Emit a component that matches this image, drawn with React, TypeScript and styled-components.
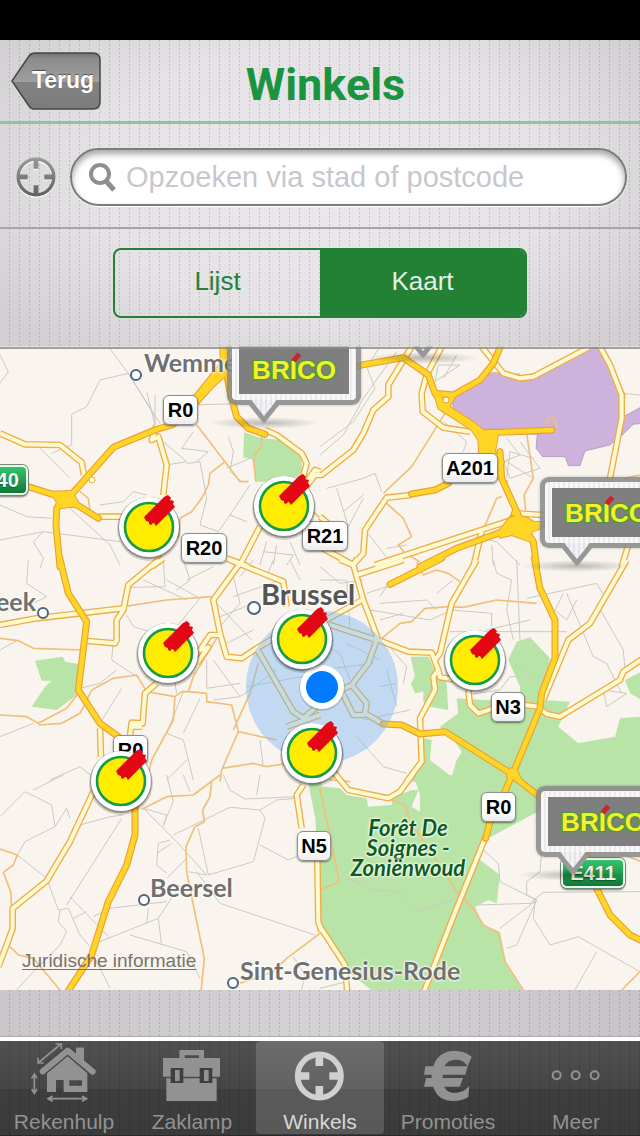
import React from "react";
import styled, { createGlobalStyle, css } from "styled-components";

const GREEN = "#238135";
const MAP_TOP = 346;
const MAP_WIDTH = 640;
const MAP_HEIGHT = 644;

const GlobalStyle = createGlobalStyle`
  *, *::before, *::after { box-sizing: border-box; }
  body { margin: 0; background: #000; font-family: "Liberation Sans", Arial, sans-serif; }
  button { font: inherit; color: inherit; border: 0; padding: 0; background: none; cursor: pointer; }
`;

const paper = css`
  background:
    conic-gradient(from 270deg at 1px 2px, rgba(120, 112, 118, 0.3) 90deg, transparent 0) 9px 0 / 10px 4px,
    radial-gradient(ellipse 60% 75% at 50% 45%, #ebe9ec 0%, #e4e2e5 60%, #d3d0d4 100%);
`;

const Screen = styled.div`
  min-height: 100vh;
  display: flex;
  flex-direction: column;
`;

const StatusBar = styled.div`
  height: 40px;
  background: #000;
`;

const Page = styled.div`
  flex: 1;
  display: flex;
  flex-direction: column;
  position: relative;
  background: #cfccd0;
`;

const Top = styled.div`
  ${paper}
`;

const Header = styled.header`
  display: grid;
  grid-template-columns: 104px 1fr 104px;
  align-items: center;
  height: 84px;
  padding: 0 0 0 11px;
  border-bottom: 3px solid #8cc79b;
`;

const BackButton = styled.button`
  position: relative;
  width: 90px;
  height: 58px;
  padding-left: 14px;
  color: #fff;
  font-size: 23px;
  font-weight: 700;
  text-shadow: 0 -1px 1px rgba(0, 0, 0, 0.5);

  svg { position: absolute; inset: 0; }
  span { position: relative; }
`;

const Title = styled.h1`
  margin: 8px 0 0;
  color: #1a9440;
  font-family: Roboto, "Liberation Sans", sans-serif;
  font-size: 45px;
  line-height: 60px;
  font-weight: 700;
  text-align: center;
`;

const SearchRow = styled.form`
  display: flex;
  align-items: center;
  gap: 12px;
  height: 105px;
  padding: 2px 13px 0 14px;
  border-bottom: 2px solid #a6a4a7;
`;

const LocateButton = styled.button`
  width: 44px;
  height: 44px;
  svg { display: block; }
`;

const SearchField = styled.label`
  flex: 1;
  display: flex;
  align-items: center;
  gap: 10px;
  height: 58px;
  padding: 0 24px 0 16px;
  border: 2px solid #7b7b7b;
  border-radius: 29px;
  background: #fff;
  box-shadow: inset 0 4px 6px rgba(0, 0, 0, 0.35), 0 1px 1px #fff;
`;

const SearchInput = styled.input`
  flex: 1;
  min-width: 0;
  height: 44px;
  padding: 2px 0 0;
  border: 0;
  outline: 0;
  background: transparent;
  color: #333;
  font-family: inherit;
  font-size: 29px;
  &::placeholder { color: #c7c7cd; opacity: 1; }
`;

const SegmentRow = styled.div`
  display: flex;
  justify-content: center;
  height: 117px;
  padding-top: 19px;
`;

const Segments = styled.div`
  display: flex;
  width: 414px;
  max-width: 90%;
  height: 70px;
  border: 2px solid ${GREEN};
  border-radius: 8px;
  overflow: hidden;
`;

const Segment = styled.button<{ $active?: boolean }>`
  flex: 1;
  padding-bottom: 4px;
  font-size: 26px;
  background: ${(p) => (p.$active ? GREEN : "transparent")};
  color: ${(p) => (p.$active ? "#e4efe6" : GREEN)};
`;

const MapView = styled.main`
  flex: 1;
  min-height: 500px;
  position: relative;
  overflow: hidden;
  background: #f9f5ee;

  &::after {
    content: "";
    position: absolute;
    inset: 0 0 auto;
    height: 3px;
    background: linear-gradient(rgba(220, 218, 220, 0.7) 0 1px, rgba(140, 138, 140, 0.8) 1px);
  }
`;

const MapPlane = styled.div`
  position: absolute;
  top: 0;
  left: 50%;
  width: ${MAP_WIDTH}px;
  height: ${MAP_HEIGHT}px;
  margin-left: -${MAP_WIDTH / 2}px;
  > svg { position: absolute; left: 0; top: 0; }
`;

type Spot = { $x: number; $y: number };

const at = css<Spot>`
  position: absolute;
  left: ${(p) => p.$x}px;
  top: ${(p) => p.$y - MAP_TOP}px;
`;

const Place = styled.span<Spot & { $city?: boolean; $end?: boolean }>`
  ${at}
  ${(p) => p.$end && "transform: translateX(-100%);"}
  color: ${(p) => (p.$city ? "#555" : "#707070")};
  font-family: Lato, sans-serif;
  font-size: ${(p) => (p.$city ? 29 : 25)}px;
  line-height: 24px;
  font-weight: 700;
  white-space: nowrap;
  text-shadow: 0 0 2px #fff, 0 0 3px #fff, 0 0 3px #fff;
`;

const ForestName = styled.span<Spot>`
  ${at}
  width: 140px;
  color: #0e5c1c;
  font-family: Lato, sans-serif;
  font-size: 22px;
  line-height: 20px;
  font-style: italic;
  font-weight: 700;
  text-align: center;
  text-shadow: 0 0 2px #fff, 0 0 3px #fff, 0 0 3px #fff;
`;

const Shield = styled.span<Spot & { $w: number; $green?: boolean }>`
  ${at}
  width: ${(p) => p.$w}px;
  height: 30px;
  border: 1px solid #8d8d8d;
  border-radius: 6px;
  background: linear-gradient(#fff 60%, #ececec);
  box-shadow: 0 1px 2px rgba(0, 0, 0, 0.5);
  color: #000;
  font-size: 20px;
  line-height: 29px;
  font-weight: 700;
  text-align: center;
  ${(p) =>
    p.$green &&
    css`
      border: 2px solid #eef5ee;
      background: linear-gradient(#35c46c, #0e7a36);
      box-shadow: 0 0 0 1px #6d8a74, 0 2px 2px rgba(0, 0, 0, 0.5);
      color: #f2faf3;
      line-height: 27px;
      text-shadow: 0 1px 1px rgba(0, 60, 20, 0.6);
    `}
`;

const PinButton = styled.button<Spot>`
  ${at}
  width: 76px;
  height: 80px;
  margin: -40px 0 0 -38px;
  svg { display: block; }
`;

const CalloutButton = styled.button<Spot>`
  ${at}
  width: 134px;
  height: 71px;
  padding: 6px 7px;
  border: 5px solid rgba(135, 135, 135, 0.85);
  border-radius: 9px;
  background: repeating-linear-gradient(to right, #f8f8f9 0 3px, #ebebed 3px 5px) padding-box;
  box-shadow: 0 0 3px rgba(0, 0, 0, 0.25);

  svg { position: absolute; left: -24px; top: 61px; }
`;

const BrandPlate = styled.span`
  display: flex;
  align-items: center;
  justify-content: center;
  height: 49px;
  background: #7f7f7f;
`;

const Brand = styled.span`
  position: relative;
  color: #f7ee2c;
  font-size: 26px;
  line-height: 28px;
  font-weight: 700;
  -webkit-text-stroke: 3px #4d9a3c;
  paint-order: stroke fill;

  &::after {
    content: "";
    position: absolute;
    left: 40px;
    top: -1px;
    width: 9px;
    height: 5px;
    background: #c9252c;
    transform: rotate(-48deg);
  }
`;

const LegalLink = styled.a<Spot>`
  ${at}
  color: #77736e;
  font-size: 19px;
  line-height: 22px;
  text-decoration: underline;
  text-underline-offset: 2px;
  text-decoration-thickness: 1px;
`;

const BottomStrip = styled.div`
  height: 47px;
  background:
    conic-gradient(from 270deg at 1px 2px, rgba(110, 102, 108, 0.3) 90deg, transparent 0) 9px 0 / 10px 4px,
    linear-gradient(to right, #cac6ca, #d4d2d5 50%, #c8c3c9);
`;

const TabBar = styled.nav`
  display: flex;
  height: 99px;
  border-top: 4px solid #fff;
  box-shadow: 0 -1px 0 #aaa8ab;
  background:
    repeating-linear-gradient(to right, transparent 0 9px, rgba(0, 0, 0, 0.1) 9px 10px),
    linear-gradient(#505050 0, #464646 48px, #3e3e3e 48px, #3b3b3b 94px, #2a2a2a 94px);
`;

const Tab = styled.button<{ $active?: boolean }>`
  flex: 1;
  height: 93px;
  display: flex;
  flex-direction: column;
  align-items: center;
  gap: 4px;
  border-radius: 4px;
  font-size: 21px;
  line-height: 26px;
  color: ${(p) => (p.$active ? "#d8d8d8" : "#929292")};
  background: ${(p) => (p.$active ? "linear-gradient(#6c6c6c, #626262 48px, #5a5a5a 48px, #585858)" : "none")};
  svg { flex: none; }
`;

/* Map geometry: six survey sheets, three drawing units to the pixel. */
type Sheet = {
  x: number;
  y: number;
  parks: string;
  airport?: string;
  lanes: string;
  minor: string;
  roads: string;
  motorways: string;
  hubs?: string;
};

const sheets: Sheet[] = [
  {
    x: 0,
    y: 345,
    parks: "M732,262 L785,280 L850,285 L905,330 L905,380 L880,410 L765,410 L758,340 L730,338Z",
    lanes:
      "M325,5 L385,85 L480,235 M385,85 L300,105 L260,185 L215,208 L215,300 L155,325 M120,310 L210,400 M0,30 L25,80 L0,115 M385,85 L465,215 M440,140 L465,240 M590,180 L730,175 M490,290 L560,350 L510,358 M580,260 L545,310 L625,320 L590,350 M560,355 L600,350 L620,460 L600,540 L655,560 L690,510 M680,370 L750,340 L770,345 M0,480 L80,515 L155,520 M0,585 L130,560 L100,590 L130,640 L120,670 M210,490 L330,600 L360,660 M300,480 L370,470 L400,440 L440,450 M750,420 L690,510 L740,530 M790,620 L880,630 L860,660 M685,275 L700,320 L690,380 L725,410 M130,560 L360,590 M465,150 L465,240 M870,590 L900,660 M800,590 L780,660 M830,600 L820,660",
    minor:
      "M590,240 L675,350 L720,410 L745,410 M675,350 L630,385 L625,420 L605,460 L575,500 L540,520 L535,580 M785,275 L785,300 L760,340 L768,410 M240,440 L265,460 L270,500 L300,525 M940,500 L960,520",
    roads:
      "M0,265 L75,298 L180,300 L245,352 L252,390 M470,240 L455,285 L475,275 L500,360 L490,450 M295,515 L370,515 M795,255 L830,270 L905,325 L920,355 L908,400 M920,410 L945,375 L960,380 M720,660 L780,545 M455,665 L490,640 M680,640 L720,655 L745,665",
    motorways:
      "M670,-5 L672,60 L660,92 L590,170 L545,220 L515,240 L470,253 L340,307 L215,448 M675,60 L690,140 L710,215 L745,250 L795,268 M85,425 L195,460 M200,460 L295,520 M200,455 L170,490 L168,540 L180,665",
    hubs: "M580,155 L665,50 L680,90 L600,160Z M150,440 L215,438 L245,490 L215,485 L180,490 L165,500 L170,470Z M660,-5 L688,-5 L684,80 L664,80Z",
  },
  {
    x: 320,
    y: 345,
    parks: "",
    airport:
      "M397,155 L515,83 L600,100 L640,95 L800,8 L835,5 L870,50 L915,150 L905,270 L870,300 L795,318 L780,362 L745,362 L735,335 L668,335 L648,310 L652,268 L535,265 L500,262 L400,195Z M910,215 L965,185 L965,235 L940,238 L905,272Z",
    lanes:
      "M180,5 L140,65 L165,130 L100,230 L0,305 M230,20 L130,160 L70,270 L0,330 M355,60 L420,60 L345,110 L355,60 M410,30 L370,100 M370,230 L440,290 L430,320 M560,280 L600,330 L550,350 L570,400 L660,370 L600,290 M20,430 L130,400 L165,385 L185,440 M50,430 L85,545 L130,460 M70,500 L130,450 M480,580 L530,590 L600,660 M140,560 L210,650 M560,350 L640,400 M560,400 L570,320 L640,340 M910,145 L960,150 M515,600 L520,660 M200,610 L260,600",
    minor:
      "M375,205 L275,365 L190,445 M200,475 L250,520 L275,575 L235,600 L255,625 L300,650 M620,265 L640,400 L612,450 L617,495 M545,455 L530,460 L470,600 M675,240 L688,218 L704,222 L710,250 M515,83 L600,88 M545,408 L565,408 M915,400 L960,390",
    roads:
      "M275,5 L205,120 L205,155 L160,195 L130,265 L100,315 L5,390 L-15,390 L-60,450 L-80,465 M365,5 L320,90 L305,145 L308,200 L370,248 L450,260 M485,5 L550,85 L600,100 L640,95 L805,8 M840,5 L870,60 L905,150 L905,220 L868,410 M275,450 L200,458 L135,555 L130,625 L95,665 M-10,600 L100,660 M165,660 L590,520 M460,665 L485,560 M0,515 L30,540 M590,505 L670,510 M925,600 L905,665",
    motorways:
      "M115,62 L250,38 L325,90 L345,145 L380,190 L460,240 L500,290 M345,145 L400,150 L480,105 L520,55 L545,-5 M375,195 L400,150 M500,262 L535,262 L695,255 M540,320 L545,400 L590,500 L605,535 L640,590 L650,665 M590,545 L410,610 L300,665 M275,447 L345,435 L385,415",
    hubs: "M340,140 L365,150 L372,175 L450,225 L500,262 L535,262 L525,320 L552,350 L535,400 L478,330 L475,285 L455,255 L355,190Z M575,510 L620,518 L640,530 L675,532 L670,548 L635,560 L630,590 L575,570 L540,578 L535,560Z M600,505 L585,480 L570,520Z",
  },
  {
    x: 0,
    y: 560,
    parks: "M105,302 L188,290 L195,305 L235,312 L230,405 L170,450 L95,440 L135,380 L155,362 L125,362Z",
    lanes:
      "M85,0 L80,70 L140,110 L70,145 M380,165 L400,200 L450,215 M490,0 L495,80 L385,82 M500,60 L600,115 L530,200 M560,60 L640,20 M650,130 L755,240 M660,170 L760,130 M340,240 L335,300 L410,350 M365,385 L300,490 M0,530 L100,490 M550,395 L500,520 L550,540 L570,620 L580,660 M600,415 L550,520 M150,660 L240,620 L290,660 M620,300 L620,385 L720,370 M640,300 L720,410 L830,330 M720,410 L640,420 M0,270 L50,242 M700,50 L720,130 L660,200 M780,540 L790,620 M860,320 L960,350 M760,0 L720,50 M700,110 L840,60 M680,250 L760,210 M550,0 L570,60 L530,90 M430,60 L560,120 M240,385 L300,370 L350,330 M520,340 L530,400 M820,0 L800,50 M560,600 L500,660 M740,380 L960,340 M870,0 L900,60",
    minor:
      "M0,235 L55,242 L100,265 L250,270 M370,140 L500,120 L635,110 M650,235 L580,350 L565,395 L545,395 L525,410 L440,395 L410,345 L340,355 L275,390 L240,460 L185,490 L115,495 M565,395 L620,400 L620,425 L695,435 L715,515 L665,630 L660,665 M525,410 L520,480 L455,600 L440,660 M0,465 L80,470 L115,490 L200,445 L235,400 M715,515 L830,540 M665,625 L760,610 L800,620 L850,612 M775,310 L750,400 L700,510",
    roads:
      "M0,195 L110,175 L370,145 M475,0 L385,75 L370,150 L350,180 L350,240 L345,250 L262,243 M720,10 L640,120 L660,220 L680,290 L725,295 L770,265 L830,230 M690,0 L850,65 L860,140 M660,225 L630,225 L600,270 L625,262 L590,310 M470,370 L435,400 L428,490 L395,488 L390,525 M395,500 L425,500 M300,505 L303,590 M770,265 L880,455 L910,475 L950,440 M860,500 L960,465",
    motorways: "M178,-10 L205,100 L260,185 L235,390 L300,490 L355,530",
  },
  {
    x: 320,
    y: 560,
    parks:
      "M410,415 L450,418 L600,425 L600,380 L565,300 L590,245 L630,232 L690,295 L665,420 L750,425 L715,500 L775,550 L885,530 L900,475 L965,470 L965,665 L250,665 L300,600 L312,535 L335,540 L330,600 L395,650 L410,600 L425,575 L405,545 L360,500 L415,460Z M272,290 L325,290 L350,340 L380,370 L385,450 L330,440 L310,425 L310,395 L285,400 L272,370 L285,350Z M915,360 L965,335 L965,420 L930,400Z",
    lanes:
      "M350,100 L400,60 M180,130 L320,120 L350,150 M150,150 L330,180 L395,150 L515,160 L515,200 M180,180 L250,160 M390,215 L740,215 M520,0 L530,40 L575,60 L560,150 L580,240 M590,0 L600,240 M620,115 L830,70 L860,120 M500,210 L630,180 M730,100 L705,150 L740,180 L770,120 M740,100 L820,290 L860,310 L905,400 M850,390 L920,400 L860,440 L850,390 M830,130 L910,270 L915,330 M0,60 L80,60 L90,200 M180,300 L80,250 M440,405 L540,390 L570,350 L600,350 M130,480 L270,450 M110,530 L190,620 L260,640 M0,330 L160,310 M200,330 L230,440 M190,240 L260,320 L250,370 M570,300 L640,360 M0,20 L60,70 L130,60 M140,100 L200,80 L180,110 M0,250 L60,280 L90,360 M180,380 L230,370",
    minor: "M290,5 L310,45 L350,30 L385,40 L420,65 M185,235 L240,190 L275,185 L315,145 L390,140 L430,142 L530,120 L650,130 M30,660 L90,665",
    roads:
      "M470,0 L395,130 L360,280 L345,300 M60,0 L100,15 L130,120 L175,240 L265,275 L335,278 L355,330 L340,350 L345,390 L300,475 L305,605 L260,665 M100,15 L112,-5 M110,45 L250,0 M0,190 L130,118 M15,190 L170,240 L145,310 L95,375 L0,420 M95,375 L140,430 L135,460 L190,492 M65,395 L100,465 L135,465 M355,330 L360,352 L400,358 M445,390 L450,435 L475,460 L520,445 M920,0 L810,190 L745,240 L670,420 M615,435 L655,440 L680,462 L720,470 L900,360 L910,335 L965,298",
    motorways: "M210,73 L365,-5 M643,-5 L660,85 L705,180 L705,295 L665,400 L660,445 L575,650 M190,492 L245,495 L300,522 L375,515 L580,645",
    hubs: "M570,625 L590,630 L605,660 L560,650Z",
  },
  {
    x: 0,
    y: 775,
    parks: "M925,25 L965,20 L965,120 L945,125Z",
    lanes:
      "M100,45 L190,0 M0,125 L75,50 L155,90 L165,155 L75,200 L52,240 L140,310 L175,405 L205,400 L240,480 L270,515 M165,155 L200,100 L210,130 M365,130 L200,390 M240,150 L330,125 L370,120 M430,100 L530,200 L620,300 L565,290 M595,160 L625,300 L760,260 L795,130 L780,105 L690,97 L520,180 M500,0 L520,80 L490,150 M670,0 L690,45 L735,72 L885,65 M780,105 L830,75 L885,70 M780,210 L865,255 L890,245 M510,195 L475,205 L470,270 L500,295 M470,235 L515,205 M590,290 L660,385 L945,480 M280,425 L330,400 L500,380 M445,400 L440,445 M475,430 L300,500 M475,430 L485,510 M390,480 L560,530 L600,610 M540,330 L475,430 M180,405 L175,440 L200,470 L180,510 L100,590 L50,645 M210,365 L330,490 M550,0 L570,50 M780,0 L770,60 M270,520 L330,640 M560,250 L500,310 M220,430 L260,410 M430,100 L500,120 L490,155 M300,40 L260,90 L240,150 M905,645 L915,600 L880,545",
    minor:
      "M425,103 L500,65 L580,60 L660,0 M635,20 L630,65 L608,105 L613,140 L585,155 L558,215 L560,290 L580,390 L613,550 L603,650 M0,222 L52,240 L40,270 L10,292 L32,350 L35,400 M30,515 L55,540 L100,550 L180,645 M960,475 L860,550 L820,590 L720,625",
    roads: "M280,50 L210,200 L180,250 L140,318 L38,400 L38,460 L20,510 L-5,575 M910,30 L890,60 L905,160 M952,250 L955,440 L965,470",
    motorways: "M405,90 L405,180 L380,270 L325,380 L275,540 L200,655",
  },
  {
    x: 320,
    y: 775,
    parks:
      "M-30,30 L60,40 L80,60 L140,70 L145,95 L215,90 L215,70 L275,45 L295,45 L275,95 L300,110 L300,60 L280,0 L965,0 L965,60 L700,85 L495,195 L480,255 L540,300 L530,385 L505,375 L465,395 L490,450 L540,470 L560,570 L610,650 L160,650 L85,590 L0,460 L-15,100Z",
    lanes:
      "M80,310 L170,345 L240,350 L290,410 L410,370 M490,225 L535,265 L540,320 L650,375 L635,385 L470,390 M665,230 L660,290 L620,320 L620,360 L650,375 L540,460 M650,375 L590,510 L560,520 M635,380 L670,352 L960,350 M645,380 L640,430 L690,510 L775,485 L960,590 M830,530 L765,645 M0,640 L80,620",
    minor:
      "M0,40 L58,320 L0,345 M215,75 L255,90 L275,155 L300,180 L410,350 L460,400 L490,450 L535,475 L555,560 L610,645 M960,590 L905,645 M900,235 L965,260",
    roads: "M497,185 L410,400 L310,655 M0,455 L75,570 L82,655 M40,-10 L85,45 L205,70 L240,50 L280,-5",
    motorways: "M580,-10 L555,50 L510,140 L497,190 M575,0 L665,70 M800,235 L830,340 L870,420 L930,480 L965,497",
  },
];

type Layer = "parks" | "airport" | "lanes" | "minor" | "roads" | "motorways" | "hubs";

function SheetLayer({ name, ...paint }: { name: Layer } & React.SVGProps<SVGGElement>) {
  return (
    <g strokeLinejoin="round" {...paint}>
      {sheets.map((s) =>
        s[name] ? <path key={s.x + "-" + s.y} transform={`translate(${s.x} ${s.y}) scale(0.33333)`} d={s[name]} /> : null
      )}
    </g>
  );
}

const towns = [
  [136, 375, 5],
  [43, 613, 5],
  [254, 608, 6],
  [144, 900, 5],
  [233, 983, 5],
];

function BaseMap() {
  return (
    <svg width={MAP_WIDTH} height={MAP_HEIGHT} viewBox={`0 ${MAP_TOP} ${MAP_WIDTH} ${MAP_HEIGHT}`} aria-hidden="true">
      <rect x="0" y={MAP_TOP} width={MAP_WIDTH} height={MAP_HEIGHT} fill="#f9f5ee" />
      <SheetLayer name="parks" fill="#b9e4a7" />
      <SheetLayer name="airport" fill="#cdb2db" stroke="#a58fb5" strokeWidth="2" />
      <SheetLayer name="lanes" fill="none" stroke="#cbc8c4" strokeWidth="3" />
      <SheetLayer name="minor" fill="none" stroke="#f1bf7c" strokeWidth="5" />
      <SheetLayer name="roads" fill="none" stroke="#f0ac45" strokeWidth="20" />
      <SheetLayer name="roads" fill="none" stroke="#fefad2" strokeWidth="12" />
      <SheetLayer name="motorways" fill="none" stroke="#ee9f35" strokeWidth="21" strokeLinecap="round" />
      <SheetLayer name="hubs" fill="#ee9f35" stroke="#ee9f35" strokeWidth="6" />
      <SheetLayer name="motorways" fill="none" stroke="#ffd526" strokeWidth="14" strokeLinecap="round" />
      <SheetLayer name="hubs" fill="#ffd526" />
      <circle cx="446" cy="400" r="3" fill="#f9f5ee" stroke="#ee9f35" />
      <circle cx="92" cy="480" r="3" fill="#fefad2" stroke="#f0ac45" />
      <circle cx="322" cy="687" r="76" fill="rgba(120, 180, 246, 0.42)" />
      {towns.map(([x, y, r]) => (
        <circle key={x} cx={x} cy={y} r={r} fill="#fff" stroke="#50647c" strokeWidth="2" />
      ))}
    </svg>
  );
}

function Pin({ x, y }: { x: number; y: number }) {
  return (
    <PinButton $x={x} $y={y} aria-label="Winkel">
      <svg width="76" height="80" viewBox="-38 -40 76 80">
        <circle cy="2" r="32" fill="rgba(0,0,0,0.16)" />
        <circle cy="1" r="31" fill="rgba(0,0,0,0.3)" />
        <circle r="30" fill="#fff" />
        <circle r="24" fill="#ffec00" stroke="#149a48" strokeWidth="2.6" />
        <path d="M-5,-10 L15,-30 L19,-32 L22,-29 L21,-27 L25,-26 L24,-23 L26,-20 L7,-1 L5,-4 L4,-4 L2,-2 L0,-3 L0,-5 L-3,-6Z" fill="#e30613" />
      </svg>
    </PinButton>
  );
}

function Callout({ x, y }: { x: number; y: number }) {
  return (
    <CalloutButton $x={x} $y={y} aria-label="Brico winkel">
      <BrandPlate>
        <Brand>BRICO</Brand>
      </BrandPlate>
      <svg width="116" height="36" viewBox="-40 0 116 36">
        <defs>
          <radialGradient id="ground">
            <stop offset="0" stopColor="#000" stopOpacity="0.25" />
            <stop offset="1" stopColor="#000" stopOpacity="0" />
          </radialGradient>
        </defs>
        <ellipse cx="16" cy="23" rx="56" ry="6" fill="url(#ground)" />
        <path d="M3,-1 L29,-1 L16,20Z" fill="#f2f2f4" />
        <path d="M8,0V6 M13,0V14 M18,0V14 M23,0V6" stroke="#e4e4e8" strokeWidth="2" />
        <path d="M2,2.5 L16,20 L30,2.5" fill="none" stroke="#989898" strokeWidth="5" strokeLinejoin="round" />
      </svg>
    </CalloutButton>
  );
}

function Crosshair({ stroke, width }: { stroke: string; width: number }) {
  return (
    <g fill="none" stroke={stroke}>
      <circle r="65" strokeWidth={width} />
      <path d="M-65,0H-30 M65,0H30 M0,-65V-30 M0,65V30" strokeWidth={width + 6} />
    </g>
  );
}

const HouseIcon = (
  <>
    <path d="M138,20h24v54l-24,-20Z" fill="currentColor" />
    <path fillRule="evenodd" fill="currentColor" d="M51,94 L113,44 L172,94 V153 H101 V117 H78 V153 H51Z M118,118h38v16h-38Z" />
    <path d="M36,92 L113,28 L189,93" fill="none" stroke="#474747" strokeWidth="27" />
    <path d="M38,91 L113,29 L188,92" fill="none" stroke="currentColor" strokeWidth="18" strokeLinecap="round" strokeLinejoin="round" />
    <path d="M138,20h24v46l-24,-20Z" fill="currentColor" />
    <path
      d="M24,66 L93,9 M13,100V155 M55,173H169 M24,50V66H41 M77,9H94V25 M5,112L13,99L21,112 M5,144L13,157L21,144 M68,165L54,173L68,181 M156,165L170,173L156,181"
      fill="none"
      stroke="currentColor"
      strokeWidth="5"
    />
  </>
);

const ToolboxIcon = (
  <>
    <path fillRule="evenodd" fill="currentColor" d="M64,27H138V51H186V107H15V51H64Z M80,43V51H123V43Z" />
    <path fill="currentColor" d="M25,112H176V180H25Z" />
    <path fill="#3f3f3f" d="M38,81H76V126H38Z M125,81H163V126H125Z" />
    <path fill="currentColor" d="M51,87H65V120H51Z M138,87H152V120H138Z" />
  </>
);

const EuroIcon = (
  <path
    fill="currentColor"
    d="M173,47 C157,34 140,30 120,30 C88,30 66,48 58,76 H34 L30,101 H53 V111 H36 L30,137 H58 C66,165 88,180 118,180 C138,180 153,174 163,168 L166,134 C154,149 138,155 124,155 C106,155 96,149 91,137 H137 L147,111 H86 V101 H154 L161,76 H91 C98,62 110,56 126,56 C142,56 154,64 161,76 Z"
  />
);

const MoreIcon = (
  <g fill="none" stroke="currentColor" strokeWidth="6">
    <circle cx="44" cy="103" r="12" />
    <circle cx="101" cy="103" r="12" />
    <circle cx="158" cy="103" r="12" />
  </g>
);

const LocateIcon = (
  <g transform="translate(100 105)">
    <Crosshair stroke="#d0d0d0" width={17} />
  </g>
);

const tabs = [
  { label: "Rekenhulp", icon: HouseIcon },
  { label: "Zaklamp", icon: ToolboxIcon },
  { label: "Winkels", icon: LocateIcon, active: true },
  { label: "Promoties", icon: EuroIcon },
  { label: "Meer", icon: MoreIcon },
];

const shields = [
  { text: "R0", x: 163, y: 395, w: 35 },
  { text: "R20", x: 181, y: 533, w: 46 },
  { text: "R21", x: 302, y: 521, w: 46 },
  { text: "A201", x: 442, y: 453, w: 56 },
  { text: "N3", x: 491, y: 692, w: 34 },
  { text: "R0", x: 113, y: 735, w: 35 },
  { text: "R0", x: 481, y: 792, w: 35 },
  { text: "N5", x: 297, y: 831, w: 34 },
  { text: "E40", x: -26, y: 465, w: 54, green: true },
  { text: "E411", x: 561, y: 858, w: 64, green: true },
];

const pins = [
  [149, 527],
  [284, 506],
  [168, 653],
  [302, 639],
  [475, 660],
  [312, 753],
  [121, 781],
];

const callouts = [
  [386, 269],
  [227, 334],
  [540, 477],
  [536, 786],
];

export default function App() {
  return (
    <Screen>
      <GlobalStyle />
      <StatusBar />
      <Page>
        <Top>
          <Header>
            <BackButton>
              <svg width="90" height="58" viewBox="0 0 90 58" aria-hidden="true">
                <defs>
                  <linearGradient id="back" x1="0" y1="0" x2="0" y2="1">
                    <stop offset="0" stopColor="#707070" />
                    <stop offset="0.1" stopColor="#8b8b8b" />
                    <stop offset="0.52" stopColor="#a0a0a0" />
                    <stop offset="0.52" stopColor="#838383" />
                    <stop offset="1" stopColor="#7c7c7c" />
                  </linearGradient>
                </defs>
                <path d="M1,29 L18,4 Q20,1 24,1 H82 Q89,1 89,8 V50 Q89,57 82,57 H24 Q20,57 18,54Z" fill="url(#back)" stroke="#474747" strokeWidth="1.5" />
              </svg>
              <span>Terug</span>
            </BackButton>
            <Title>Winkels</Title>
          </Header>
          <SearchRow onSubmit={(e) => e.preventDefault()}>
            <LocateButton type="button" aria-label="Mijn locatie">
              <svg width="44" height="44" viewBox="-80 -80 160 160">
                <defs>
                  <linearGradient id="steel" gradientUnits="userSpaceOnUse" x1="0" y1="-70" x2="0" y2="70">
                    <stop offset="0" stopColor="#999" />
                    <stop offset="1" stopColor="#606060" />
                  </linearGradient>
                </defs>
                <g transform="translate(0 4)">
                  <Crosshair stroke="#fff" width={12} />
                </g>
                <Crosshair stroke="url(#steel)" width={12} />
              </svg>
            </LocateButton>
            <SearchField>
              <svg width="28" height="30" viewBox="0 0 28 30" fill="none" stroke="#8e8e93" strokeWidth="4" aria-hidden="true">
                <circle cx="12" cy="12" r="9" />
                <path d="M18,19 L26,28" strokeWidth="5" />
              </svg>
              <SearchInput type="text" placeholder="Opzoeken via stad of postcode" aria-label="Opzoeken via stad of postcode" />
            </SearchField>
          </SearchRow>
          <SegmentRow>
            <Segments>
              <Segment>Lijst</Segment>
              <Segment $active>Kaart</Segment>
            </Segments>
          </SegmentRow>
        </Top>
        <MapView>
          <MapPlane>
            <BaseMap />
            <Place $x={144} $y={350}>Wemmel</Place>
            <Place $x={36} $y={589} $end>Dilbeek</Place>
            <Place $x={261} $y={582} $city>Brussel</Place>
            <Place $x={150} $y={875}>Beersel</Place>
            <Place $x={240} $y={958}>Sint-Genesius-Rode</Place>
            <ForestName $x={338} $y={818}>
              Forêt De
              <br />
              Soignes -
              <br />
              Zoniënwoud
            </ForestName>
            {shields.map((s) => (
              <Shield key={s.text + s.x} $x={s.x} $y={s.y} $w={s.w} $green={s.green}>
                {s.text}
              </Shield>
            ))}
            {callouts.map(([x, y]) => (
              <Callout key={x} x={x} y={y} />
            ))}
            <svg width={MAP_WIDTH} height={MAP_HEIGHT} viewBox={`0 ${MAP_TOP} ${MAP_WIDTH} ${MAP_HEIGHT}`} aria-hidden="true">
              <circle cx="322" cy="688" r="23" fill="rgba(0,0,0,0.15)" />
              <circle cx="322" cy="687" r="22" fill="#fff" />
              <circle cx="322" cy="687" r="16" fill="#007aff" />
            </svg>
            {pins.map(([x, y]) => (
              <Pin key={x} x={x} y={y} />
            ))}
            <LegalLink href="#juridisch" $x={22} $y={950}>
              Juridische informatie
            </LegalLink>
          </MapPlane>
        </MapView>
        <BottomStrip />
        <TabBar>
          {tabs.map((t) => (
            <Tab key={t.label} $active={t.active}>
              <svg width="68" height="64" viewBox="0 0 204 192" aria-hidden="true">
                {t.icon}
              </svg>
              {t.label}
            </Tab>
          ))}
        </TabBar>
      </Page>
    </Screen>
  );
}
